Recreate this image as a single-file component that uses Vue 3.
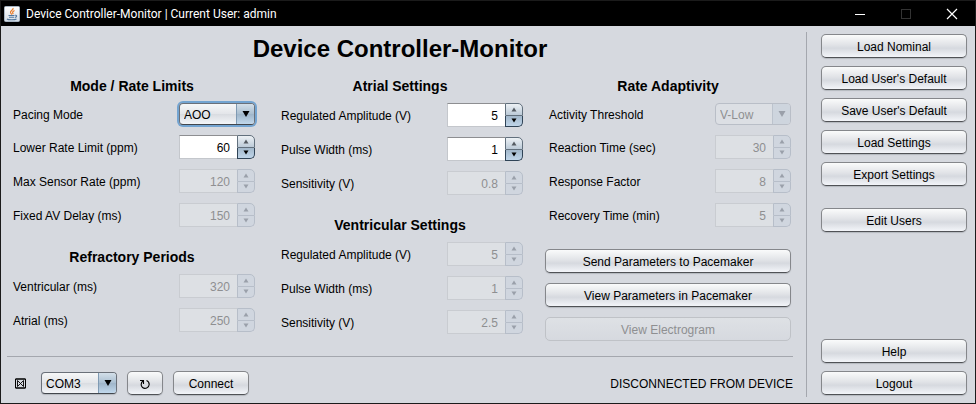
<script setup>
import { reactive } from 'vue'

const columns = reactive([
  {
    groups: [
      {
        title: 'Mode / Rate Limits',
        fields: [
          { id: 'pacing-mode', label: 'Pacing Mode', kind: 'select', value: 'AOO', options: ['AOO', 'VOO', 'AAI', 'VVI'] },
          { id: 'lower-rate', label: 'Lower Rate Limit (ppm)', value: 60, step: 1 },
          { id: 'max-sensor-rate', label: 'Max Sensor Rate (ppm)', value: 120, step: 1, disabled: true },
          { id: 'fixed-av-delay', label: 'Fixed AV Delay (ms)', value: 150, step: 10, disabled: true },
        ],
      },
      {
        title: 'Refractory Periods',
        fields: [
          { id: 'ventricular-refractory', label: 'Ventricular (ms)', value: 320, step: 10, disabled: true },
          { id: 'atrial-refractory', label: 'Atrial (ms)', value: 250, step: 10, disabled: true },
        ],
      },
    ],
  },
  {
    groups: [
      {
        title: 'Atrial Settings',
        fields: [
          { id: 'atrial-amplitude', label: 'Regulated Amplitude (V)', value: 5, step: 0.1 },
          { id: 'atrial-pulse', label: 'Pulse Width (ms)', value: 1, step: 0.1 },
          { id: 'atrial-sensitivity', label: 'Sensitivity (V)', value: 0.8, step: 0.1, disabled: true },
        ],
      },
      {
        title: 'Ventricular Settings',
        fields: [
          { id: 'ventricular-amplitude', label: 'Regulated Amplitude (V)', value: 5, step: 0.1, disabled: true },
          { id: 'ventricular-pulse', label: 'Pulse Width (ms)', value: 1, step: 0.1, disabled: true },
          { id: 'ventricular-sensitivity', label: 'Sensitivity (V)', value: 2.5, step: 0.1, disabled: true },
        ],
      },
    ],
  },
  {
    groups: [
      {
        title: 'Rate Adaptivity',
        fields: [
          { id: 'activity-threshold', label: 'Activity Threshold', kind: 'select', value: 'V-Low', options: ['V-Low', 'Low', 'Med', 'High'], disabled: true },
          { id: 'reaction-time', label: 'Reaction Time (sec)', value: 30, step: 10, disabled: true },
          { id: 'response-factor', label: 'Response Factor', value: 8, step: 1, disabled: true },
          { id: 'recovery-time', label: 'Recovery Time (min)', value: 5, step: 1, disabled: true },
        ],
      },
    ],
    actions: [
      { label: 'Send Parameters to Pacemaker' },
      { label: 'View Parameters in Pacemaker' },
      { label: 'View Electrogram', disabled: true },
    ],
  },
])

const sidebar = [
  ['Load Nominal', "Load User's Default", "Save User's Default", 'Load Settings', 'Export Settings'],
  ['Edit Users'],
  ['Help', 'Logout'],
]

const connection = reactive({ port: 'COM3', ports: ['COM1', 'COM2', 'COM3'] })

function nudge(field, direction) {
  field.value = Number((Number(field.value) + direction * field.step).toFixed(2))
}
</script>

<template>
  <div class="window">
    <header class="titlebar">
      <svg class="app-icon" viewBox="0 0 16 16" aria-hidden="true">
        <defs>
          <linearGradient id="tile" x1="0" y1="0" x2="0" y2="1">
            <stop offset="0" stop-color="#ffffff" />
            <stop offset="1" stop-color="#d3dbe4" />
          </linearGradient>
        </defs>
        <rect x="0.5" y="0.5" width="15" height="15" rx="1" fill="url(#tile)" stroke="#a9b6c4" />
        <path d="M9 2C10 4 6 4.500 6.500 6.500Q6.700 7.500 8 8.500M10.500 4.500C8.500 5.500 8 6.500 9.300 8" fill="none" stroke="#ea7a25" stroke-width="1.200" />
        <path d="M4.500 9.500H10.500M5 11.300H10M11 9.300C13.500 8.800 13 11.300 10.800 11.500M3 13C4 14 11 14 12.500 13" fill="none" stroke="#53789e" stroke-width="1.100" />
      </svg>
      <span class="caption">Device Controller-Monitor | Current User: admin</span>
      <button class="win-btn" aria-label="Minimize">
        <svg viewBox="0 0 12 12"><path d="M1 6.500H11" stroke="#fff" /></svg>
      </button>
      <button class="win-btn" aria-label="Maximize" disabled>
        <svg viewBox="0 0 12 12"><rect x="1.500" y="1.500" width="9" height="9" fill="none" stroke="#333" /></svg>
      </button>
      <button class="win-btn" aria-label="Close">
        <svg viewBox="0 0 12 12"><path d="M1 1L11 11M11 1L1 11" stroke="#fff" stroke-width="1.200" /></svg>
      </button>
    </header>

    <div class="body">
      <main class="main">
        <h1>Device Controller-Monitor</h1>
        <div class="columns">
          <div v-for="(column, c) in columns" :key="c" class="column">
            <section v-for="group in column.groups" :key="group.title" class="group">
              <h2>{{ group.title }}</h2>
              <div class="fields">
                <div v-for="field in group.fields" :key="field.id" class="field">
                  <label :for="field.id">{{ field.label }}</label>
                  <span v-if="field.kind === 'select'" class="combo" :class="{ off: field.disabled, focused: field.id === 'pacing-mode' }">
                    <select :id="field.id" v-model="field.value" :disabled="field.disabled">
                      <option v-for="option in field.options" :key="option">{{ option }}</option>
                    </select>
                    <span class="drop">
                      <svg class="drop-arrow" viewBox="0 0 8 8"><path d="M0.500 1H7.500L4 7Z" fill="currentColor" /></svg>
                    </span>
                  </span>
                  <span v-else class="spinner" :class="{ off: field.disabled }">
                    <input :id="field.id" v-model="field.value" type="number" :step="field.step" :disabled="field.disabled" />
                    <span class="steps">
                      <button class="up" :disabled="field.disabled" :aria-label="'Increase ' + field.label" @click="nudge(field, 1)">
                        <svg viewBox="0 0 6 5"><path d="M3 0.500L5.500 4.500H0.500Z" fill="currentColor" /></svg>
                      </button>
                      <button class="down" :disabled="field.disabled" :aria-label="'Decrease ' + field.label" @click="nudge(field, -1)">
                        <svg viewBox="0 0 6 5"><path d="M3 4.500L5.500 0.500H0.500Z" fill="currentColor" /></svg>
                      </button>
                    </span>
                  </span>
                </div>
              </div>
            </section>
            <div v-if="column.actions" class="actions">
              <button v-for="action in column.actions" :key="action.label" class="btn" :disabled="action.disabled">{{ action.label }}</button>
            </div>
          </div>
        </div>

        <footer class="status">
          <svg class="link-state" viewBox="0 0 11 11" role="img" aria-label="Not connected">
            <path d="M0.500 1H10.500M0.500 10H10.500" stroke="#000" stroke-width="1.600" />
            <path d="M0.500 1V10M10.500 1V10" stroke="#000" />
            <path d="M2.500 2.500L8.500 8.500M8.500 2.500L2.500 8.500M2.500 2.500V8.500M8.500 2.500V8.500" fill="none" stroke="#000" stroke-width="0.900" />
          </svg>
          <span class="combo">
            <select v-model="connection.port" aria-label="Serial port">
              <option v-for="port in connection.ports" :key="port">{{ port }}</option>
            </select>
            <span class="drop">
              <svg class="drop-arrow" viewBox="0 0 8 8"><path d="M0.500 1H7.500L4 7Z" fill="currentColor" /></svg>
            </span>
          </span>
          <button class="btn refresh" aria-label="Refresh ports">
            <svg viewBox="0 0 12 12">
              <path d="M1 2.500H4.500V6M4 3C1.800 4.500 1.500 8 3.500 9.500C6 11.300 10 10 10.200 6.500C10.200 4.500 9.300 3.200 7.500 2.500" fill="none" stroke="#000" stroke-width="1.100" />
            </svg>
          </button>
          <button class="btn connect">Connect</button>
          <output class="message">DISCONNECTED FROM DEVICE</output>
        </footer>
      </main>

      <nav class="sidebar" aria-label="Device actions">
        <div v-for="(set, s) in sidebar" :key="s" class="set">
          <button v-for="name in set" :key="name" class="btn">{{ name }}</button>
        </div>
      </nav>
    </div>
  </div>
</template>

<style>
body {
  margin: 0;
  background: #d6d9df;
}
</style>

<style scoped>
.window,
.window * {
  box-sizing: border-box;
}

.window {
  display: flex;
  flex-direction: column;
  min-height: 100vh;
  border: 1px solid #1b1b1b;
  background: #d6d9df;
  color: #000;
  font: 12px/16px "Liberation Sans", Arial, sans-serif;
}

button,
input,
select {
  margin: 0;
  font: inherit;
  color: inherit;
}

svg {
  display: block;
}

.titlebar {
  display: flex;
  align-items: center;
  height: 25px;
  padding-left: 3px;
  background: #000;
  color: #fff;
  font-family: Roboto, "Noto Sans", sans-serif;
}

.app-icon {
  width: 16px;
  height: 16px;
}

.caption {
  flex: 1;
  padding-left: 6px;
}

.win-btn {
  display: flex;
  align-items: center;
  justify-content: center;
  width: 46px;
  height: 25px;
  padding: 0;
  border: 0;
  background: none;
}

.win-btn svg {
  width: 12px;
  height: 12px;
}

.body {
  display: flex;
  flex: 1;
  padding: 6px 8px 6px 6px;
}

.main {
  display: flex;
  flex: 1;
  flex-direction: column;
  padding-right: 13px;
}

h1 {
  margin: 0;
  padding: 3px 0 13px;
  font-size: 24px;
  line-height: 28px;
  text-align: center;
}

.columns {
  display: grid;
  grid-template-columns: repeat(3, 1fr);
  gap: 26px;
  padding: 0 2px 0 6px;
}

.column {
  display: flex;
  flex-direction: column;
  gap: 20px;
}

h2 {
  margin: 0 0 7px;
  padding-right: 4px;
  font-size: 14px;
  line-height: 20px;
  text-align: center;
}

.fields {
  display: flex;
  flex-direction: column;
  gap: 10px;
}

.field {
  display: flex;
  align-items: center;
  justify-content: space-between;
}

label,
.message {
  padding-top: 2px;
}

.combo {
  display: grid;
  grid-template-columns: 1fr 18px;
  width: 76px;
  height: 22px;
  border: 1px solid #6a7079;
  border-bottom-color: #42464c;
  border-radius: 4px;
  background: linear-gradient(#f6f7f8, #e3e5e9 50%, #d9dce1 51%, #f3f5f8);
  box-shadow: 0 1px 1px #b4b8be;
}

.combo.focused {
  box-shadow: 0 0 0 2px #73a4d1;
}

.combo select {
  grid-row: 1;
  grid-column: 1 / 3;
  width: 100%;
  padding: 2px 18px 0 4px;
  border: 0;
  outline: 0;
  appearance: none;
  background: none;
  opacity: 1;
}

.drop {
  display: flex;
  grid-row: 1;
  grid-column: 2;
  align-items: center;
  justify-content: center;
  border-left: 1px solid #7f9ab3;
  border-radius: 0 3px 3px 0;
  background: linear-gradient(#d3dfe9, #a9bed0 50%, #9fb5c9 51%, #c1d8ec);
  pointer-events: none;
}

.drop-arrow {
  width: 8px;
  height: 8px;
}

.combo.off {
  border-color: #b9bec7;
  background: #dcdfe4;
  box-shadow: none;
  color: #8e8f91;
}

.combo.off .drop {
  border-color: #bcc3cd;
  background: #ced5de;
  color: #9aa0aa;
}

.spinner {
  display: flex;
  width: 76px;
  height: 24px;
}

.spinner input {
  flex: 1;
  min-width: 0;
  padding: 2px 7px 0;
  border: 1px solid #c4c7cc;
  border-top-color: #8d8e91;
  border-right: 0;
  border-radius: 0;
  outline: 0;
  appearance: textfield;
  background: #fff;
  text-align: right;
}

.spinner input::-webkit-inner-spin-button {
  display: none;
}

.steps {
  display: flex;
  flex-direction: column;
  width: 18px;
}

.steps button {
  display: flex;
  flex: 1;
  align-items: center;
  justify-content: center;
  padding: 0;
  border: 1px solid #62707d;
}

.steps svg {
  width: 6px;
  height: 5px;
}

.up {
  border-radius: 0 5px 0 0;
  background: linear-gradient(#edf1f5, #bccbd8);
  color: #555b62;
}

.steps .down {
  border-top: 0;
  border-color: #2f4356;
  border-radius: 0 0 5px 0;
  background: linear-gradient(#a3b8cb, #bfd5e9);
}

.spinner.off input {
  border-color: #c9ccd1;
  background: #dde0e4;
  color: #8e8f91;
}

.spinner.off .steps button {
  border-color: #b7bec9;
  background: #d0d6df;
  color: #9aa0aa;
}

.btn {
  height: 24px;
  padding: 2px 8px 0;
  border: 1px solid #85878b;
  border-bottom-color: #505256;
  border-radius: 5px;
  background: linear-gradient(#fafbfb, #e1e3e7 45%, #d6d9df 60%, #f3f5f9);
  box-shadow: 0 1px 1px #b4b8be;
  white-space: nowrap;
}

.btn:disabled {
  border-color: #bfc2c7;
  background: linear-gradient(#dee1e5, #d6d9df);
  box-shadow: none;
  color: #8e8f91;
}

.actions {
  display: flex;
  flex-direction: column;
  gap: 10px;
  margin: 2px 0 0 -4px;
}

.status {
  display: flex;
  align-items: center;
  margin-top: auto;
  padding: 14px 0 2px 8px;
  border-top: 1px solid #a4a7ae;
}

.link-state {
  width: 11px;
  height: 11px;
  margin-right: 15px;
}

.refresh {
  display: flex;
  align-items: center;
  justify-content: center;
  width: 36px;
  margin: 0 10px;
}

.refresh svg {
  flex: none;
  width: 12px;
  height: 12px;
}

.connect {
  width: 76px;
}

.message {
  margin-left: auto;
}

.sidebar {
  display: flex;
  flex-direction: column;
  gap: 22px;
  padding: 2px 0 2px 14px;
  border-left: 1px solid #a4a7ae;
}

.set {
  display: flex;
  flex-direction: column;
  gap: 8px;
  width: 146px;
}

.set:last-child {
  margin-top: auto;
}
</style>
